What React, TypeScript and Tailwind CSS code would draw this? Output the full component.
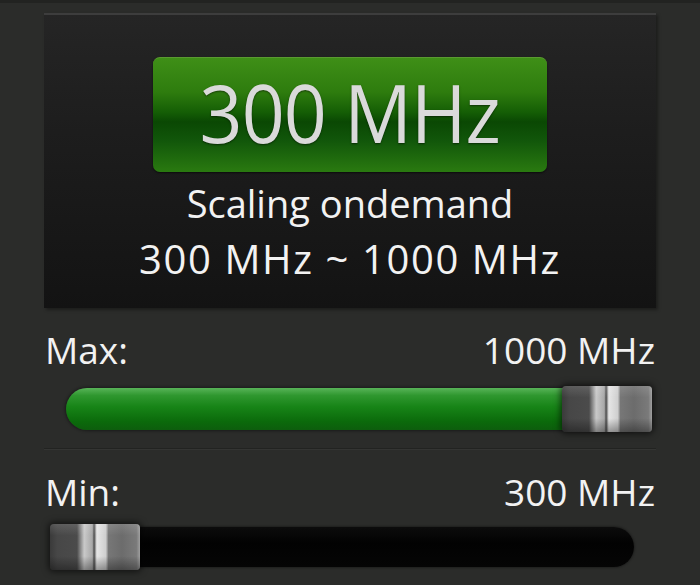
import React from "react";

const font = { fontFamily: '"Open Sans", "Noto Sans", sans-serif' };

function Thumb({ className }: { className: string }) {
  return (
    <div
      className={
        "absolute w-[90px] h-[46px] rounded-[4px] shadow-[0_0_6px_2px_rgba(0,0,0,0.55)] overflow-hidden bg-[linear-gradient(90deg,#3a3a3a_0%,#474747_8%,#4b4b4b_30%,#7c7c7c_33%,#c9c9c9_38%,#a8a8a8_47%,#4a4a4a_49%,#e6e6e6_52%,#cfcfcf_62%,#777_65%,#6c6c6c_80%,#7a7a7a_96%,#a0a0a0_100%)] " +
        className
      }
    >
      <div className="absolute inset-0 bg-[linear-gradient(180deg,rgba(255,255,255,0.12)_0%,rgba(255,255,255,0)_25%,rgba(0,0,0,0)_70%,rgba(0,0,0,0.35)_100%)]" />
    </div>
  );
}

export default function App() {
  return (
    <div
      className="w-[700px] h-[585px] overflow-hidden bg-[#2b2c2a] border-t-[3px] border-[#222321] text-[#f2f2f2]"
      style={font}
    >
      <div className="px-[44px] pt-[10px]">
        {/* Status panel */}
        <div className="h-[295px] border-t-2 border-[#3d3d3d] bg-[linear-gradient(180deg,#252525_0%,#1d1d1d_40%,#131313_100%)] shadow-[2px_2px_3px_rgba(0,0,0,0.35)] flex flex-col items-center">
          <div className="mt-[42px] w-[394px] h-[115px] rounded-[7px] border-t border-[#5a9a30] bg-[linear-gradient(180deg,#3f8f17_0%,#2e7c0e_30%,#145d05_48%,#0a4803_56%,#11560a_72%,#2a7a10_100%)] shadow-[0_1px_2px_rgba(0,0,0,0.6)] flex items-center justify-center">
            <span className="text-[80px] leading-none text-[#dadada] tracking-[-1px] scale-x-[0.94] -translate-y-[3px] whitespace-nowrap [text-shadow:0_1px_2px_rgba(0,0,0,0.5)]">
              300 MHz
            </span>
          </div>
          <div className="mt-[5px] text-[38px] leading-[52px] whitespace-nowrap">Scaling ondemand</div>
          <div className="mt-[4px] text-[40px] leading-[52px] tracking-[1.6px] whitespace-nowrap">300 MHz ~ 1000 MHz</div>
        </div>

        {/* Max */}
        <div className="mt-[18px] flex justify-between items-center text-[37px] leading-[48px] px-[1px]">
          <span>Max:</span>
          <span>1000 MHz</span>
        </div>
        <div className="relative mt-[12px] ml-[6px] mr-[4px] h-[46px]">
          <div className="absolute left-[16px] right-[20px] top-[2px] h-[42px] rounded-l-full bg-[linear-gradient(180deg,#58b458_0%,#2f972f_18%,#178417_45%,#0b6a0b_80%,#0d5d0d_100%)] shadow-[0_0_3px_1px_rgba(0,0,0,0.4)]" />
          <Thumb className="right-0 top-0" />
        </div>
        <div className="mt-[16px] h-[2px] border-t border-[#222321] border-b border-b-[#343533]" />

        {/* Min */}
        <div className="mt-[18px] flex justify-between items-center text-[37px] leading-[48px] px-[1px]">
          <span>Min:</span>
          <span>300 MHz</span>
        </div>
        <div className="relative mt-[8px] ml-[6px] mr-[4px] h-[46px]">
          <div className="absolute left-[16px] right-[18px] top-[3px] h-[40px] rounded-r-full bg-[linear-gradient(180deg,#0c0c0c_0%,#020202_40%,#050505_100%)] shadow-[0_0_2px_1px_rgba(0,0,0,0.3)]" />
          <Thumb className="left-0 top-0" />
        </div>
      </div>
    </div>
  );
}
